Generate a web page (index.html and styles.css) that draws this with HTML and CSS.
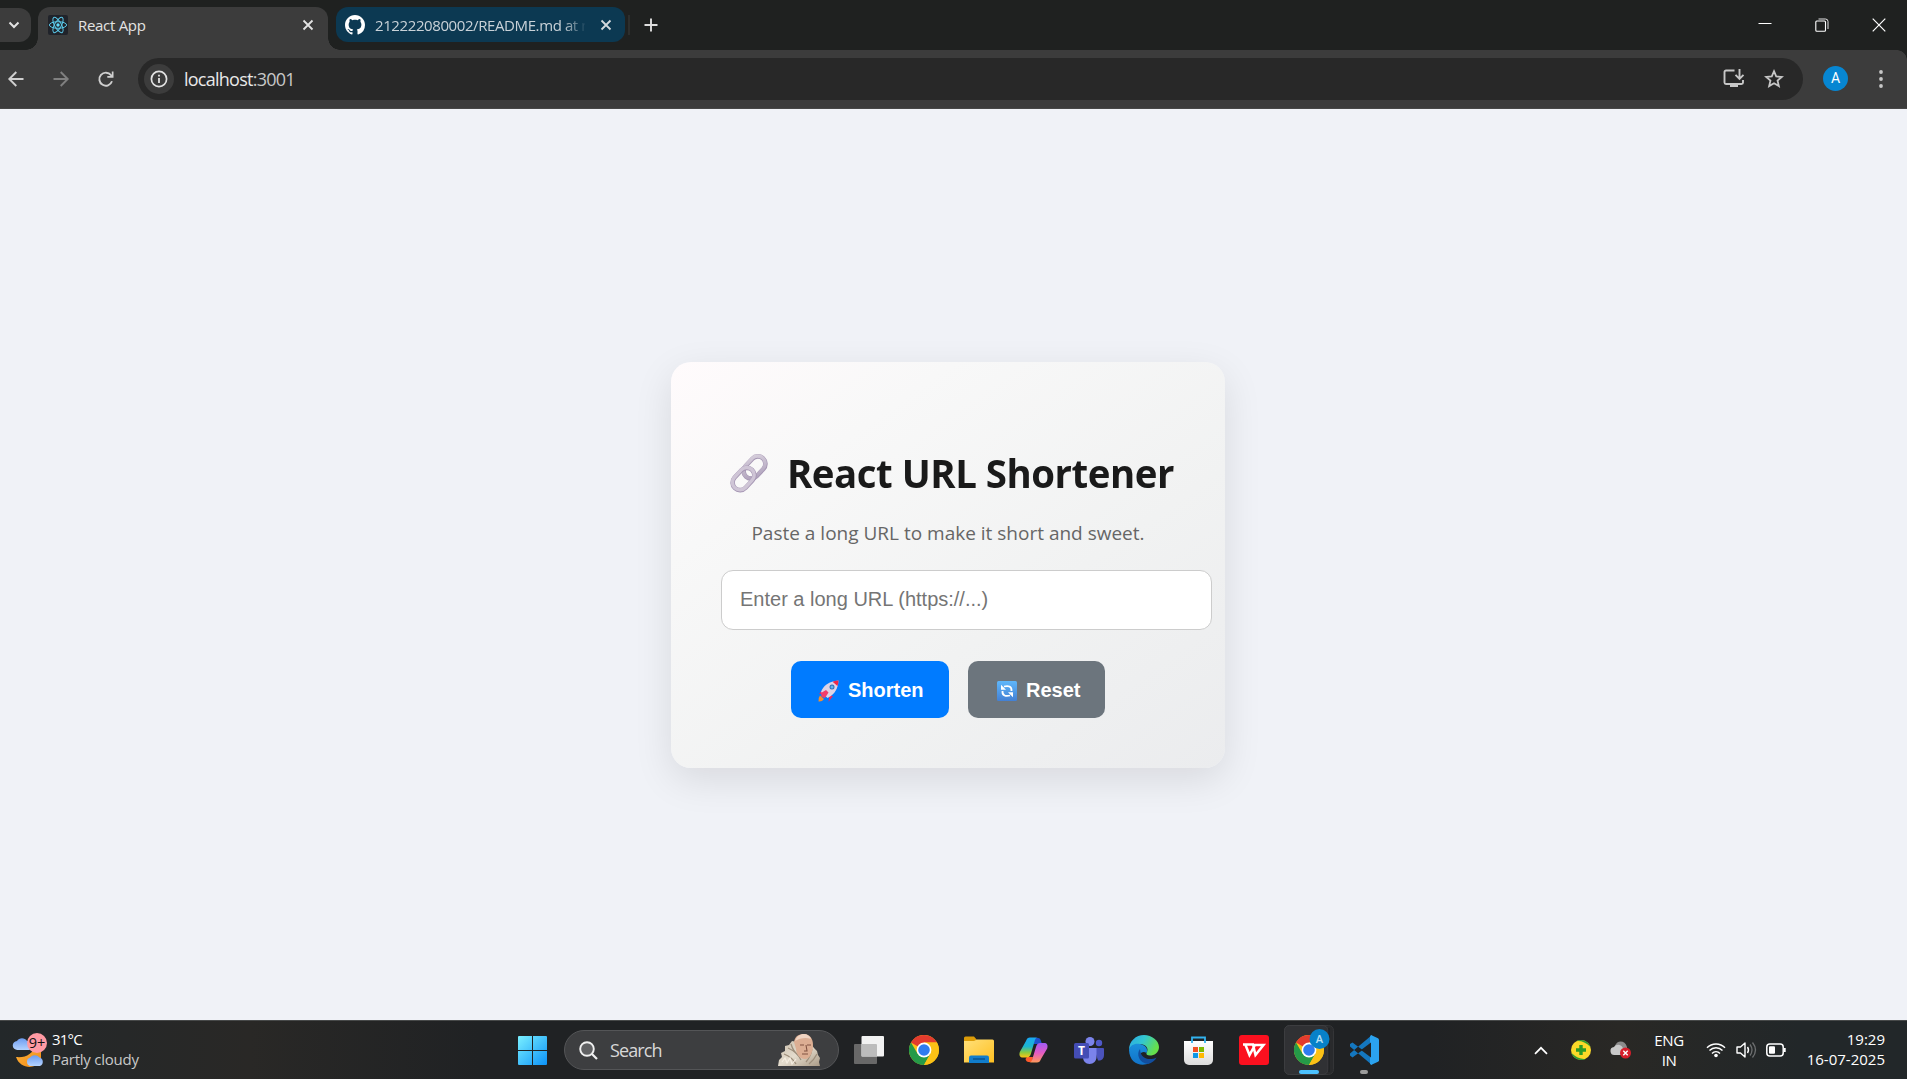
FILE: index.html
```html
<!DOCTYPE html>
<html lang="en">
<head>
<meta charset="utf-8">
<title>React App</title>
<link rel="stylesheet" href="styles.css">
</head>
<body>
<svg width="0" height="0" class="defs" aria-hidden="true">
  <defs>
    <linearGradient id="win" x1="0" y1="0" x2="1" y2="1"><stop offset="0" stop-color="#7af0ff"/><stop offset="1" stop-color="#0c92f8"/></linearGradient>
    <linearGradient id="moon" x1="0" y1="0" x2="1" y2="1"><stop offset="0" stop-color="#ffb43a"/><stop offset="1" stop-color="#ef8a17"/></linearGradient>
    <linearGradient id="cloud" x1="0" y1="0" x2="0" y2="1"><stop offset="0" stop-color="#6d9cf0"/><stop offset="1" stop-color="#b4d3ff"/></linearGradient>
    <linearGradient id="folder" x1="0" y1="0" x2="1" y2="1"><stop offset="0" stop-color="#ffe07a"/><stop offset="1" stop-color="#ffc021"/></linearGradient>
    <linearGradient id="copA" x1="0" y1="0" x2="0" y2="1"><stop offset="0" stop-color="#19a8f5"/><stop offset=".45" stop-color="#1cb6ce"/><stop offset=".75" stop-color="#8ccb3f"/><stop offset="1" stop-color="#ffc414"/></linearGradient>
    <linearGradient id="copB" x1="0" y1="0" x2="0" y2="1"><stop offset="0" stop-color="#a05cf5"/><stop offset=".5" stop-color="#e25ac4"/><stop offset="1" stop-color="#ff9a5a"/></linearGradient>
    <linearGradient id="edgeTop" x1="0" y1="0" x2="1" y2=".4"><stop offset="0" stop-color="#2aa7e8"/><stop offset=".5" stop-color="#33c7cf"/><stop offset="1" stop-color="#66e04b"/></linearGradient>
    <linearGradient id="edgeLow" x1="0" y1="0" x2="0" y2="1"><stop offset="0" stop-color="#1b8fdc"/><stop offset="1" stop-color="#1173c9"/></linearGradient>
    <linearGradient id="bag" x1="0" y1="0" x2="0" y2="1"><stop offset="0" stop-color="#fff"/><stop offset="1" stop-color="#dcdcdc"/></linearGradient>
    <linearGradient id="ruff" x1="0" y1="0" x2="1" y2="1"><stop offset="0" stop-color="#c9bdab"/><stop offset=".5" stop-color="#e4dccd"/><stop offset="1" stop-color="#a99a86"/></linearGradient>
    <linearGradient id="metal" x1="0" y1="0" x2="1" y2="1"><stop offset="0" stop-color="#d8d0dd"/><stop offset="1" stop-color="#ad9fba"/></linearGradient>
    <linearGradient id="blueKey" x1="0" y1="0" x2="0" y2="1"><stop offset="0" stop-color="#5fb7fb"/><stop offset="1" stop-color="#4380d4"/></linearGradient>
    <symbol id="chrome" viewBox="0 0 30 30">
      <circle cx="15" cy="15" r="15" fill="#fbc116"/>
      <path d="M15 15 2 7.5A15 15 0 0 1 28 7.6H15Z" fill="#e33b2e"/>
      <path d="M2 7.5A15 15 0 0 0 15 30L21.4 18.7 15 15 8.6 18.7Z" fill="#259a48"/>
      <path d="M15 7.6h13A15 15 0 0 1 15 30l6.4-11.3Z" fill="#fbc116"/>
      <circle cx="15" cy="15" r="7.4" fill="#fff"/><circle cx="15" cy="15" r="5.8" fill="#2f7cf0"/>
    </symbol>
  </defs>
</svg>

<header class="tabstrip">
  <button class="tab-search"><svg width="12" height="8" viewBox="0 0 12 8"><path d="M1.5 1.5 6 6l4.500-4.500" fill="none" stroke="#e3e3e3" stroke-width="2"/></svg></button>
  <div class="tab tab-active">
    <svg class="favicon" width="20" height="20" viewBox="0 0 20 20"><rect width="20" height="20" rx="2" fill="#20232a"/><g fill="none" stroke="#5ac8e8" stroke-width="1"><ellipse cx="10" cy="10" rx="8.600" ry="3.300"/><ellipse cx="10" cy="10" rx="8.600" ry="3.300" transform="rotate(60 10 10)"/><ellipse cx="10" cy="10" rx="8.600" ry="3.300" transform="rotate(120 10 10)"/></g><circle cx="10" cy="10" r="1.700" fill="#61dafb"/></svg>
    <span class="tab-title title-a">React App</span>
    <svg class="tab-close" width="12" height="12" viewBox="0 0 12 12"><path d="m1.500 1.500 9 9m0-9-9 9" stroke="#e3e3e3" stroke-width="1.800"/></svg>
  </div>
  <div class="tab tab-blue">
    <svg class="favicon" width="20" height="20" viewBox="0 0 16 16"><path fill="#fff" d="M8 0C3.580 0 0 3.580 0 8c0 3.540 2.290 6.530 5.470 7.590.4.070.55-.17.55-.38 0-.19-.01-.82-.01-1.490-2.010.37-2.530-.49-2.690-.94-.09-.23-.48-.94-.82-1.130-.28-.15-.68-.52-.01-.53.63-.01 1.080.58 1.230.82.72 1.210 1.870.87 2.330.66.070-.52.28-.87.51-1.070-1.780-.2-3.640-.89-3.640-3.950 0-.87.31-1.590.82-2.150-.08-.2-.36-1.020.08-2.120 0 0 .67-.21 2.200.82.64-.18 1.320-.27 2-.27s1.360.09 2 .27c1.530-1.040 2.200-.82 2.200-.82.44 1.100.16 1.920.08 2.120.51.56.82 1.270.82 2.150 0 3.070-1.870 3.750-3.650 3.950.29.25.54.73.54 1.480 0 1.070-.01 1.930-.01 2.200 0 .21.15.46.55.38A8.010 8.010 0 0 0 16 8c0-4.420-3.580-8-8-8Z"/></svg>
    <span class="tab-title title-b">212222080002/README.md at main</span>
    <svg class="tab-close" width="12" height="12" viewBox="0 0 12 12"><path d="m1.500 1.500 9 9m0-9-9 9" stroke="#d3d9dd" stroke-width="1.800"/></svg>
  </div>
  <span class="tab-divider"></span>
  <svg class="new-tab" width="14" height="14" viewBox="0 0 14 14"><path d="M7 .5v13M.5 7h13" stroke="#dedede" stroke-width="1.900"/></svg>
  <div class="window-controls">
    <svg width="14" height="14" viewBox="0 0 14 14"><path d="M.5 5.500h13" stroke="#fff"/></svg>
    <svg width="14" height="14" viewBox="0 0 14 14"><path d="M3.500 1h7a2.500 2.500 0 0 1 2.500 2.500V11" fill="none" stroke="#e5e5e5"/><rect x=".8" y="3" width="9.700" height="10.200" rx="1" fill="none" stroke="#fff" stroke-width="1.100"/></svg>
    <svg width="14" height="14" viewBox="0 0 14 14"><path d="m.7.7 12.600 12.600m0-12.600L.7 13.300" stroke="#fff" stroke-width="1.200"/></svg>
  </div>
</header>

<nav class="toolbar">
  <div class="nav-buttons">
    <svg width="16" height="16" viewBox="0 0 16 16"><path d="M8.300 1 1.300 8l7 7M1.300 8H15.500" fill="none" stroke="#cfcfcf" stroke-width="1.900"/></svg>
    <svg width="16" height="16" viewBox="0 0 16 16"><path d="m7.700 1 7 7-7 7M14.700 8H.5" fill="none" stroke="#808080" stroke-width="1.900"/></svg>
    <svg width="16" height="16" viewBox="0 0 16 16"><path d="M14 10.300A6.500 6.500 0 1 1 13 4.200l1.500 1.500" fill="none" stroke="#cfcfcf" stroke-width="1.900"/><path d="M15.500.5v6.200H9.300V4.900h4.500V.5Z" fill="#cfcfcf"/></svg>
  </div>
  <div class="omnibox">
    <span class="site-info"><svg width="18" height="18" viewBox="0 0 18 18"><circle cx="9" cy="9" r="7.600" fill="none" stroke="#e3e3e3" stroke-width="1.700"/><path d="M9 8v5M9 4.800v1.800" stroke="#e3e3e3" stroke-width="1.800"/></svg></span>
    <span class="url">localhost<span class="port">:3001</span></span>
    <svg class="install" width="22" height="19" viewBox="0 0 22 19"><path d="M11.500 1.500H3A1.500 1.500 0 0 0 1.500 3v10.500A1.500 1.500 0 0 0 3 15h15.500a1.500 1.500 0 0 0 1.500-1.500V11" fill="none" stroke="#c7c7c7" stroke-width="1.900"/><path d="M7 15h8v3H7Z" fill="#c7c7c7"/><path d="M16.500 0v9.500M12.500 5.800l4 4 4-4" fill="none" stroke="#c7c7c7" stroke-width="1.900"/></svg>
    <svg class="star" width="20" height="19" viewBox="0 0 20 19"><path d="m10 2.200 2.200 5.200 5.600.5-4.250 3.700 1.300 5.500L10 14.200l-4.850 2.900 1.300-5.500L2.200 7.900l5.600-.5Z" fill="none" stroke="#c7c7c7" stroke-width="1.800"/></svg>
  </div>
  <span class="avatar">A</span>
  <svg class="menu" width="4" height="18" viewBox="0 0 4 18"><g fill="#c7c7c7"><circle cx="2" cy="2" r="1.900"/><circle cx="2" cy="9" r="1.900"/><circle cx="2" cy="16" r="1.900"/></g></svg>
</nav>

<main class="page">
  <section class="card">
    <h1 class="heading">
      <svg width="42" height="42" viewBox="0 0 42 42"><g fill="none" stroke-linecap="round"><rect x="-7.500" y="-12.500" width="15" height="25" rx="7.500" transform="translate(26.500 15.500) rotate(43)" stroke="#a596b3" stroke-width="4.600"/><rect x="-7.500" y="-12.500" width="15" height="25" rx="7.500" transform="translate(26.300 15.200) rotate(43)" stroke="url(#metal)" stroke-width="3.400"/><rect x="-7.500" y="-12.500" width="15" height="25" rx="7.500" transform="translate(15.500 27) rotate(43)" stroke="#a596b3" stroke-width="4.600"/><rect x="-7.500" y="-12.500" width="15" height="25" rx="7.500" transform="translate(15.300 26.700) rotate(43)" stroke="#cfc5d6" stroke-width="3.400"/></g></svg>
      <span class="heading-text">React URL Shortener</span>
    </h1>
    <p class="subtitle">Paste a long URL to make it short and sweet.</p>
    <input class="url-input" type="text" placeholder="Enter a long URL (https://...)">
    <div class="actions">
      <button class="btn btn-primary">
        <svg width="21" height="22" viewBox="0 0 21 22"><path d="M5.500 8.500 1 14l4-.5ZM11.500 15.500 10.500 22l4.500-6Z" fill="#e8295f"/><path d="M3 12C5 6 11 1 20.500.5 20 8 17 14.500 9.500 18Z" fill="#ddd3e6"/><path d="M14.500 1.700Q17.500.5 20.500.5 20.500 3.500 19.500 6Z" fill="#ee2848"/><path d="m8 10 2.500 2.500L7 18l-3.500-1.200L3 13Z" fill="#f23d6b"/><path d="M2 15.500 6 19q-2 3-5.500 2.500Q0 18 2 15.500Z" fill="#f48d2e"/><circle cx="14" cy="7" r="2.500" fill="#306fb5"/><circle cx="14" cy="7" r="1.500" fill="#63b4ee"/></svg>
        <span>Shorten</span>
      </button>
      <button class="btn btn-secondary">
        <svg width="20" height="20" viewBox="0 0 20 20"><rect width="20" height="20" rx="1.500" fill="url(#blueKey)"/><g fill="none" stroke="#fff" stroke-width="1.800"><path d="M7 5.500c4-1 8-.5 7.500 4.500"/><path d="M13 14.500c-4 1-8 .5-7.500-4.500"/></g><path d="M4 3.800v5h5ZM16 16.200v-5h-5Z" fill="#fff"/></svg>
        <span>Reset</span>
      </button>
    </div>
  </section>
</main>

<footer class="taskbar">
  <div class="weather">
    <svg width="35" height="36" viewBox="0 0 35 36"><path d="M3 25C13 26 20 22 22 13l6 5v11C22 38 7 37 3 25Z" fill="url(#moon)"/><path d="M4.500 18a4.500 4.500 0 0 1-.5-9A6 6 0 0 1 14 9a4.500 4.500 0 0 1 2 9Z" fill="url(#cloud)"/><path d="M17 34a4.500 4.500 0 0 1 0-8.500 6 6 0 0 1 9.500 0A4.500 4.500 0 0 1 27 34Z" fill="url(#cloud)"/><circle cx="24" cy="11" r="10" fill="#ff9aa3"/><text x="24" y="16" text-anchor="middle" class="badge-text">9+</text></svg>
    <div class="weather-text"><span class="temp">31°C</span><span class="sky">Partly cloudy</span></div>
  </div>
  <div class="apps">
    <span class="app"><svg width="29" height="29" viewBox="0 0 29 29"><path d="M1 0h13v14H0V1a1 1 0 0 1 1-1ZM15 0h13a1 1 0 0 1 1 1v13H15ZM0 15h14v14H1a1 1 0 0 1-1-1ZM15 15h14v13a1 1 0 0 1-1 1H15Z" fill="url(#win)"/></svg></span>
    <div class="search">
      <svg width="19" height="19" viewBox="0 0 19 19"><circle cx="8" cy="8" r="6.800" fill="#606163" stroke="#f0f0f0" stroke-width="1.900"/><path d="m13 13 5 5" stroke="#f0f0f0" stroke-width="2.200"/></svg>
      <span class="search-label">Search</span>
      <svg width="44" height="34" viewBox="0 0 44 34"><path d="M1 33 2 27 5 24 4 20 8 18 8 13 12 12 15 8 20 9H29L34 11 37 15 40 18 41 22 43 25 42 29 43 33Z" fill="url(#ruff)"/><path d="M7 21q8 3 12 10M11 15q9 4 13 12M35 16q-1 7-6 13M40 21q-3 6-8 10M14 11q2 7 7 11" fill="none" stroke="#9d8e7b" stroke-width="1.300"/><path d="m5 29 3-4 2 5 3-5 2 6 4-5" fill="none" stroke="#f4ede0" stroke-width="1.200"/><path d="M17 9C18 3 22 1 27 1c6 0 9 5 9 11 0 7-3 14-8 14-6 0-9-6-9-10Z" fill="#dcae93"/><path d="M18 8c2-5 5-7 9-7 3 0 6 2 7 5-5-2-11-1-16 2Z" fill="#f0d3c1"/><path d="M23 12h4m3 0h4M29 12l1 6h-3m-2 3h6" fill="none" stroke="#805342" stroke-width="1.100"/></svg>
    </div>
    <span class="app first"><svg width="30" height="28" viewBox="0 0 30 28"><rect x="0" y="8" width="23" height="20" rx="1" fill="#686868"/><rect x="7.500" y="0" width="22.500" height="20.500" rx="1" fill="#f2f2f2"/><path d="M7.500 8H22a1 1 0 0 1 1 1v11.500H7.500Z" fill="#bcbcbc"/></svg></span>
    <span class="app"><svg width="30" height="30"><use href="#chrome"/></svg></span>
    <span class="app"><svg width="30" height="28" viewBox="0 0 30 28"><path d="M0 2a1.500 1.500 0 0 1 1.500-1.500H10L13 4v5H0Z" fill="#dc9c08"/><path d="M0 5h10l3-1.500h15.500A1.500 1.500 0 0 1 30 5v21.500H0Z" fill="url(#folder)"/><path d="M5 27v-5.500a2 2 0 0 1 2-2h16a2 2 0 0 1 2 2V27Z" fill="#117dcc"/><path d="M9 23h12" stroke="#064d87" stroke-width="1.300"/></svg></span>
    <span class="app"><svg width="29" height="27" viewBox="0 0 29 27"><path d="M14 1h5c2 0 2.500 1.500 3 3l1 3h-8Z" fill="#1d52cf"/><path d="M8 20h6l-1 5H9.500C8 25 7 24 6.500 22Z" fill="#ff5a2b"/><path d="M7 4c.8-2.500 2-3.500 4-3.500h8c-2 0-2.800 1.500-3.500 4l-3.500 12c-.8 2.800-1.800 4-4.500 4H4C1 20.500-.2 18.500.8 15Z" fill="url(#copA)"/><path d="M22 22c-.8 2.500-2 3.500-4 3.500h-8c2 0 2.800-1.500 3.500-4L17 10c.8-2.800 1.800-4 4.500-4H25c3 0 4.200 2 3.200 5.500Z" fill="url(#copB)"/></svg></span>
    <span class="app"><svg width="30" height="27" viewBox="0 0 30 27"><circle cx="25" cy="6" r="3.200" fill="#5059c9"/><path d="M20 11h9a1 1 0 0 1 1 1v6c0 4-3 6-6 5.500Z" fill="#4b53bc"/><circle cx="16" cy="4.500" r="4.500" fill="#7b83eb"/><path d="M9 11h13.500v9c0 4-3 7-7 7s-6.500-3-6.500-7Z" fill="#7b83eb"/><rect y="6" width="15" height="15.500" rx="1.500" fill="#444db5"/><text x="7.500" y="18" text-anchor="middle" class="teams-t">T</text></svg></span>
    <span class="app"><svg width="30" height="30" viewBox="0 0 30 30"><path d="M0 15C0 6 7 0 15 0s15 6 15 12-5 8.500-9 8.500c-3 0-4-1.500-3.500-2.500 3-5-1-9-7-9-5 0-9 2.500-10.500 6Z" fill="url(#edgeTop)"/><path d="M0 15C1 10 6 8 11 9c5 .7 8.500 5 6.500 9-4-3-8 1-6 5 2 3 5 5 9 5-8 4-20 1-20.500-13Z" fill="url(#edgeLow)"/><path d="M11 14c-4 5-1 14 8 15 4-1 7-3.500 8.500-6.500-6 3-16 2.500-16.500-8.500Z" fill="#124e9e"/></svg></span>
    <span class="app"><svg width="29" height="29" viewBox="0 0 29 29"><path d="M8 6V1.500h13V6" fill="none" stroke="#32b3ef" stroke-width="1.800"/><path d="M0 5h29v19a5 5 0 0 1-5 5H5a5 5 0 0 1-5-5Z" fill="url(#bag)"/><path d="M9 11h5v5H9Z" fill="#f25022"/><path d="M15 11h5v5h-5Z" fill="#7fba00"/><path d="M9 17h5v5H9Z" fill="#0c97e8"/><path d="M15 17h5v5h-5Z" fill="#ffb900"/><path d="M8 5v2M21 5v2" stroke="#32b3ef" stroke-width="1.800"/></svg></span>
    <span class="app"><svg width="30" height="30" viewBox="0 0 30 30"><rect width="30" height="30" rx="3" fill="#fb101f"/><path d="M4 9.500h10l2.500 10.500L24.500 10H16l-5.500 10L6.500 10" fill="none" stroke="#fff" stroke-width="2.500"/></svg></span>
    <span class="app running"><svg width="50" height="50" viewBox="0 0 50 50"><rect x=".5" y=".5" width="49" height="49" rx="5" fill="#292a2c" stroke="#343537"/><rect x=".5" y=".5" width="43.500" height="49" rx="5" fill="#303134" stroke="#3c3d40"/><path d="M45 3v44" stroke="#1d1e20"/><use href="#chrome" x="10" y="10" width="30" height="30"/><circle cx="35.500" cy="14" r="10" fill="#0781c8"/><text x="35.500" y="18" text-anchor="middle" class="profile-a">A</text><rect x="15" y="45" width="20" height="4" rx="2" fill="#4cc2ff"/></svg></span>
    <span class="app code"><svg width="30" height="40" viewBox="0 0 30 40"><path d="M1 9 3.500 7.500 23 22v8L1 11.500ZM1 20.500 3.500 22.500 23 8V0L1 18.500Z" fill="#1477bf"/><path d="m22 0 7 3.200a2 2 0 0 1 1 1.600v20.400a2 2 0 0 1-1 1.600L22 30l-1-1.500V1.500Z" fill="#2ba3ef"/><path d="m12 15 10-7.500v15Z" fill="#202224"/><rect x="11" y="35" width="8" height="4" rx="2" fill="#9b9b9b"/></svg></span>
  </div>
  <div class="tray">
    <svg class="chev" width="14" height="9" viewBox="0 0 14 9"><path d="m1 7.800 6-6 6 6" fill="none" stroke="#fff" stroke-width="1.700"/></svg>
    <svg class="guard" width="20" height="20" viewBox="0 0 20 20"><circle cx="10" cy="10" r="10" fill="#fbd928"/><path d="M5 1.300A10 10 0 0 1 19.500 7Q12 0 5 1.300ZM15 18.700A10 10 0 0 1 .5 13Q8 20 15 18.700Z" fill="#2c9b35"/><path d="M10 5v10M5 10h10" stroke="#2c9b25" stroke-width="3.400"/></svg>
    <svg class="onedrive" width="20" height="18" viewBox="0 0 20 18"><path d="M4 5C6-1 14-1 16 6v6H7Z" fill="#8b8b8b"/><path d="M4 14A4 4 0 0 1 3 6c2-3 7-3 8.500.5L15 10v4Z" fill="#c8c8c8"/><circle cx="14.500" cy="12" r="5.500" fill="#d71e2b"/><path d="m12.300 9.800 4.400 4.400m0-4.400-4.400 4.400" stroke="#fff" stroke-width="1.400"/></svg>
    <div class="lang"><span>ENG</span><span>IN</span></div>
    <svg class="wifi" width="20" height="16" viewBox="0 0 20 16"><g fill="none" stroke="#fff" stroke-width="1.400"><path d="M1 5.800a12.500 12.500 0 0 1 18 0"/><path d="M3.500 8.600a9 9 0 0 1 13 0"/><path d="M6 11.400a5.500 5.500 0 0 1 8 0"/></g><circle cx="10" cy="13.500" r="1.800" fill="#fff"/></svg>
    <svg class="sound" width="21" height="18" viewBox="0 0 21 18"><path d="M1 6h3.500L9 2v14l-4.500-4H1Z" fill="none" stroke="#fff" stroke-width="1.400" stroke-linejoin="round"/><path d="M11.500 6q2 3 0 6" fill="none" stroke="#fff" stroke-width="1.400"/><path d="M14 3.500q4 5.500 0 11M16.500 1.500q6 7.500 0 15" fill="none" stroke="#6d6f70" stroke-width="1.300"/></svg>
    <svg class="battery" width="20" height="14" viewBox="0 0 20 14"><rect x=".8" y="1" width="16.400" height="12" rx="3" fill="none" stroke="#fff" stroke-width="1.500"/><rect x="3" y="3.200" width="6" height="7.600" rx="1" fill="#fff"/><path d="M18.800 5v4" stroke="#fff" stroke-width="1.800"/></svg>
    <div class="clock"><span>19:29</span><span>16-07-2025</span></div>
  </div>
</footer>
</body>
</html>
```
FILE: styles.css
```css
* { box-sizing: border-box; }

body {
  margin: 0;
  width: 1907px;
  height: 1079px;
  overflow: hidden;
  display: flex;
  flex-direction: column;
  font-family: "Open Sans", "Noto Sans", sans-serif;
  background: #f0f2f7;
}

svg { display: block; flex: none; overflow: visible; }
.defs { position: absolute; }
button { border: 0; padding: 0; font: inherit; }

/* Tab strip */
.tabstrip {
  height: 50px;
  flex: none;
  display: flex;
  align-items: flex-start;
  background: #1f2120;
}
.tab-search {
  width: 31px;
  height: 34px;
  margin-top: 8px;
  padding-left: 8px;
  border-radius: 0 12px 12px 0;
  background: #3c3c3c;
  display: flex;
  align-items: center;
}
.tab { display: flex; align-items: center; }
.tab-active {
  position: relative;
  width: 290px;
  height: 43px;
  margin-left: 7px;
  padding: 0 14px 7px 10px;
  border-radius: 12px 12px 0 0;
  background: #3c3c3c;
  margin-top: 7px;
}
.tab-active::before,
.tab-active::after {
  content: "";
  position: absolute;
  bottom: 0;
  width: 12px;
  height: 12px;
}
.tab-active::before { left: -12px; background: radial-gradient(circle at 0 0, transparent 11.5px, #3c3c3c 12px); }
.tab-active::after { right: -12px; background: radial-gradient(circle at 100% 0, transparent 11.5px, #3c3c3c 12px); }
.tab-blue {
  width: 289px;
  height: 35px;
  margin: 7px 0 0 8px;
  padding: 0 13px 0 9px;
  border-radius: 12px;
  background: #0c3952;
}
.tab-title {
  margin-left: 10px;
  font-size: 15px;
  line-height: 20px;
  white-space: nowrap;
  color: #e3e3e3;
}
.title-a { letter-spacing: -0.3px; }
.title-b {
  width: 210px;
  overflow: hidden;
  letter-spacing: -0.4px;
  color: #c9d2d8;
  -webkit-mask-image: linear-gradient(90deg, #000 188px, transparent 212px);
  mask-image: linear-gradient(90deg, #000 188px, transparent 212px);
}
.tab-close { margin-left: auto; }
.tab-divider { width: 2px; height: 20px; margin: 15px 0 0 3px; background: #2d2f2e; }
.new-tab { margin: 18px 0 0 14px; }
.window-controls { margin: 18px 21px 0 auto; display: flex; gap: 43px; }

/* Toolbar */
.toolbar {
  height: 59px;
  flex: none;
  display: flex;
  align-items: center;
  padding-bottom: 1px;
  border-bottom: 1px solid #474747;
  background: radial-gradient(circle at 0 100%, #3c3c3c 9.5px, #1f2120 10px) right top / 10px 10px no-repeat, #3c3c3c;
}
.nav-buttons { display: flex; gap: 29px; margin-left: 8px; }
.omnibox {
  width: 1665px;
  height: 42px;
  margin-left: 24px;
  padding: 0 19px 0 6px;
  border-radius: 21px;
  background: #282828;
  display: flex;
  align-items: center;
}
.site-info {
  width: 30px;
  height: 30px;
  border-radius: 50%;
  background: #3c3c3c;
  display: grid;
  place-items: center;
}
.url { margin: 0 auto 0 10px; font-size: 18px; letter-spacing: -0.75px; line-height: 24px; color: #e8e8e8; }
.port { color: #c7c7c7; }
.star { margin-left: 19px; }
.avatar {
  width: 25px;
  height: 25px;
  margin-left: 20px;
  border-radius: 50%;
  background: #0786d2;
  color: #fff;
  font: 14px/25px Roboto, sans-serif;
  text-align: center;
}
.menu { margin-left: 31px; }

/* Page */
.page {
  flex: 1;
  display: flex;
  align-items: center;
  justify-content: center;
  padding: 1px 11px 0 0;
  background: #f0f2f7;
}
.card {
  width: 554px;
  height: 406px;
  padding: 82px 50px 50px;
  border-radius: 20px;
  background: linear-gradient(145deg, #fffbfc 0%, #f8f8f8 25%, #f1f2f2 62%, #ebecee 100%);
  box-shadow: 0 12px 38px rgba(0, 0, 0, 0.1);
  display: flex;
  flex-direction: column;
}
.heading {
  margin: 0;
  padding-left: 7px;
  height: 58px;
  display: flex;
  align-items: center;
  gap: 17px;
  font-size: 40px;
  line-height: 58px;
  font-weight: 700;
  letter-spacing: -0.5px;
  white-space: nowrap;
  color: #1a1a1a;
}
.heading-text { transform: scaleX(0.96); transform-origin: 0 50%; }
.subtitle {
  margin: 17px 0 0;
  height: 29px;
  font-size: 19px;
  line-height: 29px;
  text-align: center;
  white-space: nowrap;
  color: #666;
}
.url-input {
  width: 491px;
  height: 60px;
  flex: none;
  margin-top: 22px;
  padding: 0 18px 2px;
  border: 1px solid #ccc;
  border-radius: 12px;
  background: #fff;
  font: 20px "Liberation Sans", sans-serif;
}
.url-input::placeholder { color: #757575; }
.actions { display: flex; gap: 19px; margin: 31px 0 0 70px; }
.btn {
  height: 57px;
  padding-top: 2px;
  display: flex;
  align-items: center;
  gap: 9px;
  border-radius: 10px;
  font: bold 20px "Liberation Sans", sans-serif;
  color: #fff;
}
.btn-primary { width: 158px; padding-left: 27px; background: #007bff; }
.btn-secondary { width: 137px; padding-left: 29px; background: #6c757d; }

/* Taskbar */
.taskbar {
  height: 59px;
  flex: none;
  display: flex;
  align-items: center;
  border-top: 1px solid #474949;
  background: linear-gradient(90deg, #23282a 0, #292826 250px, #202224 480px, #202224 1430px, #292825 1620px, #222729 1800px);
  color: #fff;
}
.weather { width: 505px; padding-left: 13px; display: flex; align-items: center; gap: 4px; }
.badge-text { font: 14.5px "Open Sans", sans-serif; fill: #111; }
.weather-text { display: flex; flex-direction: column; padding-bottom: 2px; font-size: 15px; line-height: 20px; }
.temp { letter-spacing: -0.8px; }
.sky { letter-spacing: -0.25px; color: #c9c9c9; }
.apps { display: flex; align-items: center; }
.app { width: 55px; height: 50px; display: grid; place-items: center; }
.app.first { margin-left: 2px; }
.app.code { align-items: start; padding-top: 10px; }
.search {
  width: 275px;
  height: 40px;
  margin-left: 4px;
  padding: 0 17px 0 14px;
  border: 1px solid #545557;
  border-radius: 20px;
  background: #3d3e40;
  display: flex;
  align-items: center;
}
.search-label { margin: 0 auto 0 12px; font-size: 18px; letter-spacing: -0.9px; color: #d8d8d8; }
.teams-t { font: bold 12px "Open Sans", sans-serif; fill: #fff; }
.profile-a { font: 600 11px "Open Sans", sans-serif; fill: #b9e0f5; }
.tray { flex: 1; display: flex; align-items: center; padding-right: 22px; font-size: 15px; line-height: 20px; }
.chev { margin-left: 143px; }
.guard { margin-left: 23px; }
.onedrive { margin-left: 20px; }
.lang { width: 40px; margin-left: 18px; padding-bottom: 1px; display: flex; flex-direction: column; align-items: center; letter-spacing: -0.4px; }
.wifi { margin-left: 17px; }
.sound { margin-left: 10px; }
.battery { margin-left: 9px; }
.clock { margin-left: auto; padding-bottom: 2px; display: flex; flex-direction: column; align-items: flex-end; letter-spacing: 0; }
```
